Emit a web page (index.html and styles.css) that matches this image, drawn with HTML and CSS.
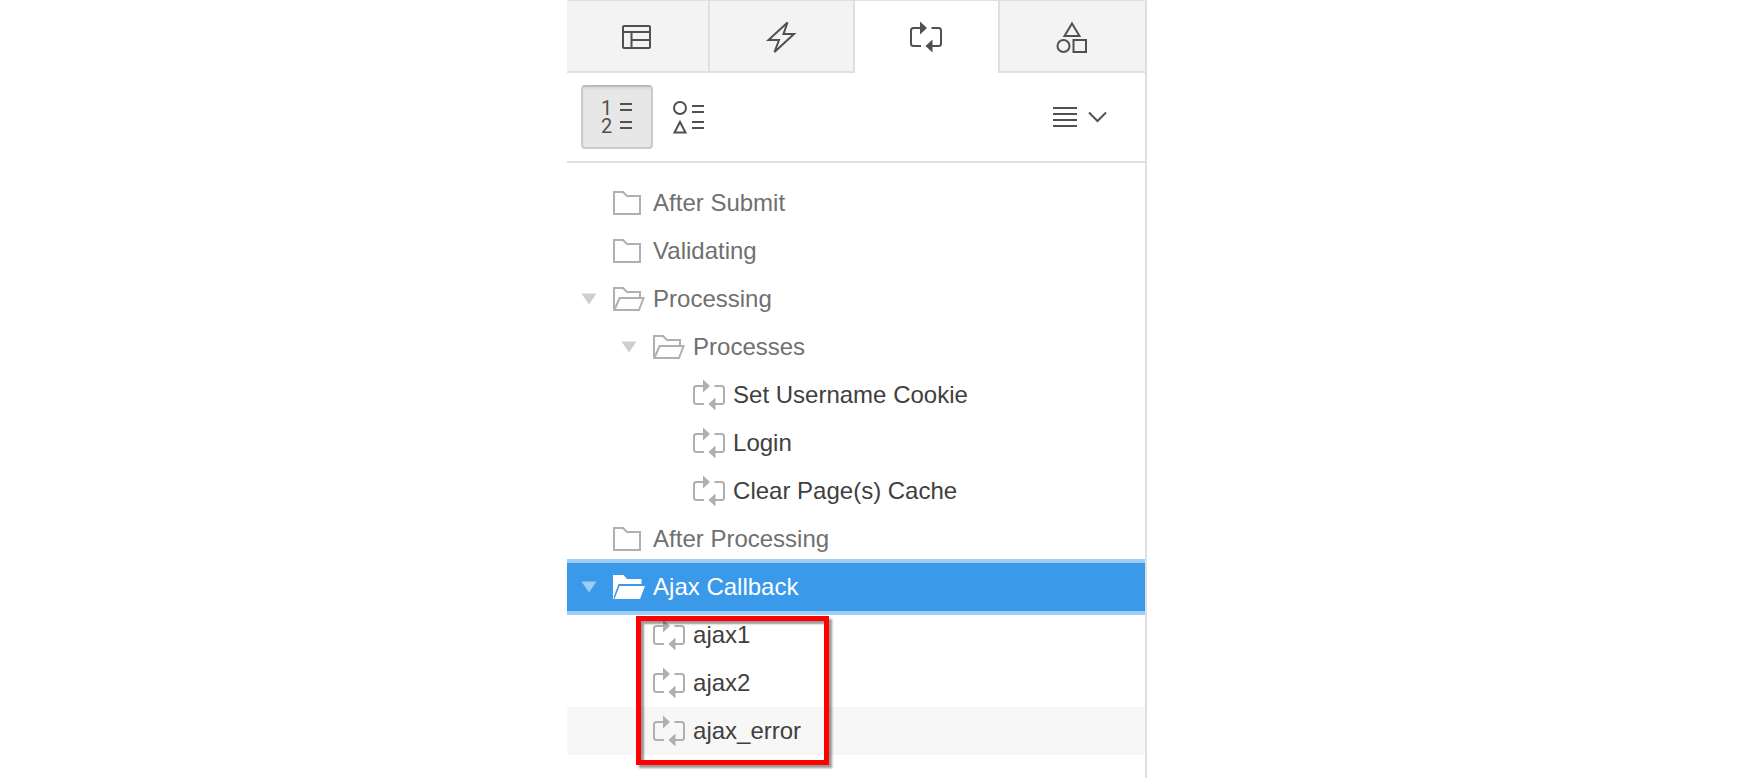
FILE: index.html
```html
<!DOCTYPE html>
<html lang="en">
<head>
<meta charset="utf-8">
<title>Page Designer - Processing</title>
<meta name="viewport" content="width=device-width, initial-scale=1">
<link rel="stylesheet" href="styles.css">
</head>
<body>
<svg class="sprite" aria-hidden="true">
  <symbol id="folder" viewBox="0 0 32 24"><path class="line" d="M1 1H10L14 5H27V23H1Z"/></symbol>
  <symbol id="folder-open" viewBox="0 0 32 24"><path class="line" d="M1 22V1H10L14 5H27V10M1.500 23L6.500 11H30.500L26 23Z"/></symbol>
  <symbol id="folder-solid" viewBox="0 0 32 24"><path class="solid" d="M0 0H10.500L14 4H28.500V9H5.500L1 21V24H0ZM6.500 11H32L27 24H1.500Z"/></symbol>
  <symbol id="process" viewBox="0 0 32 32">
    <path class="line" d="M11 25H3.500Q1 25 1 22.500V9.500Q1 7 3.500 7H11M21.500 7H28.500Q31 7 31 9.500V22.500Q31 25 28.500 25H22"/>
    <path class="solid" d="M10 0.500L17 7L10 13.500ZM22.500 18.500L15.500 25L22.500 31.500Z"/>
  </symbol>
  <symbol id="twisty" viewBox="0 0 16 12"><path class="solid" d="M0.500 0.500H15.500L8 11.500Z"/></symbol>
</svg>

<main class="page">
  <section class="panel">
    <nav class="tabs" role="tablist" aria-label="Page views">
      <button class="tab" role="tab" aria-label="Rendering">
        <svg class="icon" viewBox="0 0 32 32"><path class="line" d="M3 5H28Q29 5 29 6V26Q29 27 28 27H3Q2 27 2 26V6Q2 5 3 5ZM2 11H29M10.500 11V27M10.500 19H29"/></svg>
      </button>
      <button class="tab" role="tab" aria-label="Dynamic Actions">
        <svg class="icon" viewBox="0 0 32 32"><path class="line" d="M22.500 1.500L3.500 19H14L9.500 31L29 13H18.500Z"/></svg>
      </button>
      <button class="tab tab-active" role="tab" aria-selected="true" aria-label="Processing">
        <svg class="icon"><use href="#process"/></svg>
      </button>
      <button class="tab" role="tab" aria-label="Page Shared Components">
        <svg class="icon" viewBox="0 0 32 32"><path class="line" d="M16 2.500L23.500 15H8.500ZM17.500 19H30V31H17.500Z"/><circle class="line" cx="7.500" cy="25" r="6"/></svg>
      </button>
    </nav>

    <div class="toolbar">
      <button class="tool tool-on" aria-pressed="true" aria-label="Group by Processing Order">
        <svg class="icon" viewBox="0 0 32 32">
          <text class="digit" x="0" y="14">1</text><text class="digit" x="0" y="32">2</text>
          <path class="line" d="M19 3H31M19 9H31M19 21H31M19 27H31"/>
        </svg>
      </button>
      <button class="tool" aria-label="Group by Component Type">
        <svg class="icon" viewBox="0 0 32 32"><circle class="line" cx="7" cy="7" r="6"/><path class="line" d="M7 21L12.500 31.500H1.500ZM19 5H31M19 11H31M19 21H31M19 27H31"/></svg>
      </button>
      <button class="menu" aria-label="Menu">
        <svg class="menu-icon" viewBox="0 0 54 20"><path class="line" d="M0 1H24M0 7H24M0 13H24M0 19H24M36 5.500L44.500 14L53 5.500"/></svg>
      </button>
    </div>

    <ul class="tree" role="tree">
      <li role="treeitem"><div class="row group"><span class="twisty"></span><svg class="folder"><use href="#folder"/></svg><span>After Submit</span></div></li>
      <li role="treeitem"><div class="row group"><span class="twisty"></span><svg class="folder"><use href="#folder"/></svg><span>Validating</span></div></li>
      <li role="treeitem" aria-expanded="true">
        <div class="row group"><button class="twisty" aria-label="Collapse Processing"><svg><use href="#twisty"/></svg></button><svg class="folder"><use href="#folder-open"/></svg><span>Processing</span></div>
        <ul class="branch" role="group">
          <li role="treeitem" aria-expanded="true">
            <div class="row group level2"><button class="twisty" aria-label="Collapse Processes"><svg><use href="#twisty"/></svg></button><svg class="folder"><use href="#folder-open"/></svg><span>Processes</span></div>
            <ul class="branch" role="group">
              <li role="treeitem"><div class="row level3"><span class="twisty"></span><svg class="icon"><use href="#process"/></svg><span>Set Username Cookie</span></div></li>
              <li role="treeitem"><div class="row level3"><span class="twisty"></span><svg class="icon"><use href="#process"/></svg><span>Login</span></div></li>
              <li role="treeitem"><div class="row level3"><span class="twisty"></span><svg class="icon"><use href="#process"/></svg><span>Clear Page(s) Cache</span></div></li>
            </ul>
          </li>
        </ul>
      </li>
      <li role="treeitem"><div class="row group"><span class="twisty"></span><svg class="folder"><use href="#folder"/></svg><span>After Processing</span></div></li>
      <li role="treeitem" aria-expanded="true" aria-selected="true">
        <div class="row selected"><button class="twisty" aria-label="Collapse Ajax Callback"><svg><use href="#twisty"/></svg></button><svg class="folder"><use href="#folder-solid"/></svg><span>Ajax Callback</span></div>
        <ul class="branch marked" role="group">
          <li role="treeitem"><div class="row level2"><span class="twisty"></span><svg class="icon"><use href="#process"/></svg><span>ajax1</span></div></li>
          <li role="treeitem"><div class="row level2"><span class="twisty"></span><svg class="icon"><use href="#process"/></svg><span>ajax2</span></div></li>
          <li role="treeitem"><div class="row level2 hovered"><span class="twisty"></span><svg class="icon"><use href="#process"/></svg><span>ajax_error</span></div></li>
        </ul>
      </li>
    </ul>
  </section>
</main>
</body>
</html>
```
FILE: styles.css
```css
*,
*::after {
  box-sizing: border-box;
}

body {
  margin: 0;
  background: #fff;
  color: #404040;
  font: 24px/28px "Liberation Sans", Arial, sans-serif;
}

button {
  margin: 0;
  padding: 0;
  border: 0;
  background: none;
  color: inherit;
  font: inherit;
}

ul {
  margin: 0;
  padding: 0;
  list-style: none;
}

svg {
  display: block;
  flex: none;
  overflow: visible;
}

.sprite {
  position: absolute;
  width: 0;
  height: 0;
}

.line {
  fill: none;
  stroke: currentColor;
  stroke-width: 2;
}

.solid {
  fill: currentColor;
}

.icon {
  width: 32px;
  height: 32px;
}

.page {
  display: grid;
  grid-template-columns: 19fr minmax(0, 580px) 20fr;
}

.panel {
  grid-column: 2;
  border-right: 2px solid #dfdfdf;
}

.tabs {
  display: grid;
  grid-template-columns: 143fr 145fr 143fr 147fr;
  border-top: 1px solid #dfdfdf;
  color: #505050;
}

.tab {
  display: flex;
  align-items: center;
  justify-content: center;
  height: 72px;
  padding: 2px 2px 0 0;
  border-right: 2px solid #dfdfdf;
  border-bottom: 2px solid #dfdfdf;
  background: #f3f3f3;
}

.tab-active {
  border-color: transparent;
  border-right: 0;
  background: #fff;
}

.tab:last-child {
  border-right: 0;
  border-left: 2px solid #dfdfdf;
}

.toolbar {
  display: flex;
  align-items: center;
  padding: 12px 14px;
  border-bottom: 2px solid #dfdfdf;
  color: #505050;
}

.tool {
  display: flex;
  align-items: center;
  justify-content: center;
  width: 72px;
  height: 64px;
  border-radius: 4px;
}

.tool-on {
  border: 2px solid #cbcbcb;
  border-top-color: #bbb;
  background: #e7e7e7;
  box-shadow: inset 0 2px 2px #d8d8d8;
}

.digit {
  fill: currentColor;
  font-family: Roboto, sans-serif;
  font-size: 20px;
}

.menu {
  margin-left: auto;
  padding: 22px 24px;
}

.menu-icon {
  width: 54px;
  height: 20px;
}

.tree {
  padding: 16px 0 23px;
}

.row {
  display: flex;
  align-items: center;
  gap: 8px;
  height: 48px;
  padding-left: 14px;
  white-space: nowrap;
}

.level2 {
  padding-left: 54px;
}

.level3 {
  padding-left: 94px;
}

.group {
  color: #707070;
}

.row .icon,
.folder {
  color: #b0b0b0;
}

.folder {
  width: 32px;
  height: 24px;
}

.twisty {
  flex: none;
  width: 16px;
  margin-right: 8px;
  color: #cfcfcf;
}

.twisty svg {
  width: 16px;
  height: 12px;
}

.selected {
  background: #3b99e9;
  box-shadow: 0 -4px #9dccf4, 0 4px #9dccf4;
  color: #fff;
}

.selected .folder {
  color: #fff;
}

.selected .twisty {
  color: #9dccf4;
}

.hovered {
  background: #f7f7f7;
}

.marked {
  position: relative;
}

/* Annotation frame drawn over the callback list */
.marked::after {
  content: "";
  position: absolute;
  top: 5px;
  left: 69px;
  width: 193px;
  height: 149px;
  border: 5px solid #f00;
  box-shadow: 3px 3px 2px #0006, inset 3px 3px 2px #0006;
  pointer-events: none;
}
```
